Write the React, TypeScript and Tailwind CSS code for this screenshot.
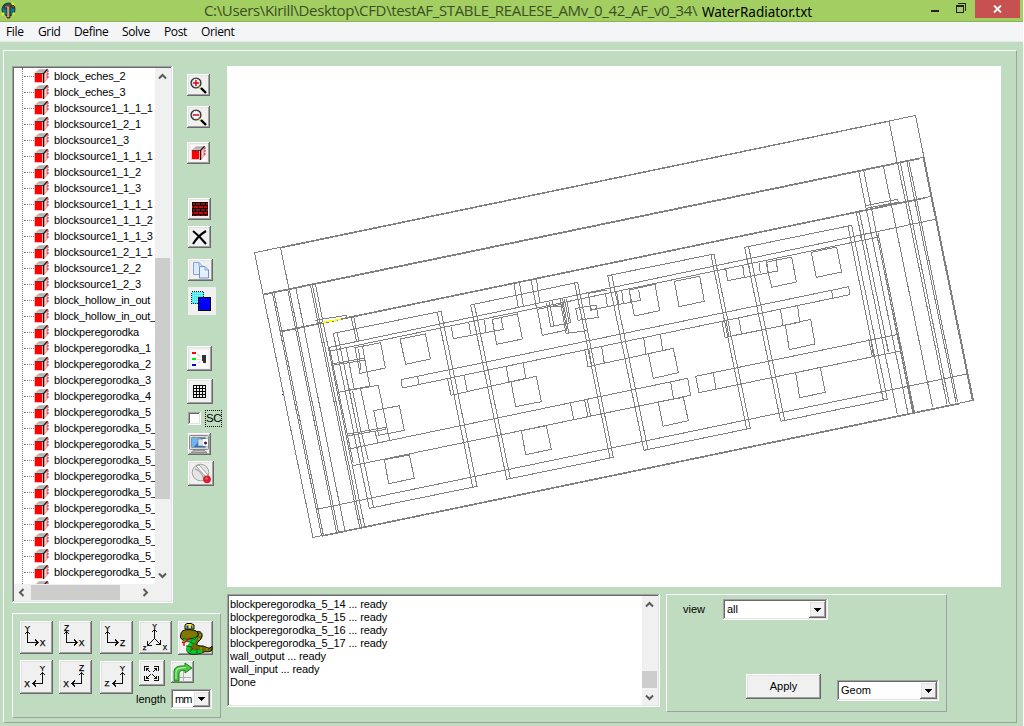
import React from "react";

const RAISED =
  "shrink-0 bg-[#f0f0f0] flex items-center justify-center shadow-[inset_-1px_-1px_#696969,inset_1px_1px_#ffffff,inset_-2px_-2px_#a0a0a0,inset_2px_2px_#e3e3e3]";
const SUNKEN =
  "shrink-0 bg-white p-[2px] shadow-[inset_-1px_-1px_#ffffff,inset_1px_1px_#a0a0a0,inset_-2px_-2px_#e3e3e3,inset_2px_2px_#696969]";
const GROUP = "border border-t-white border-l-white border-r-[#a0a0a0] border-b-[#a0a0a0]";

const treeItems = [
  "block_eches_2", "block_eches_3", "blocksource1_1_1_1", "blocksource1_2_1", "blocksource1_3",
  "blocksource1_1_1_1", "blocksource1_1_2", "blocksource1_1_3", "blocksource1_1_1_1", "blocksource1_1_1_2",
  "blocksource1_1_1_3", "blocksource1_2_1_1", "blocksource1_2_2", "blocksource1_2_3", "block_hollow_in_out",
  "block_hollow_in_out_", "blockperegorodka", "blockperegorodka_1", "blockperegorodka_2", "blockperegorodka_3",
  "blockperegorodka_4", "blockperegorodka_5", "blockperegorodka_5_", "blockperegorodka_5_", "blockperegorodka_5_",
  "blockperegorodka_5_", "blockperegorodka_5_", "blockperegorodka_5_", "blockperegorodka_5_", "blockperegorodka_5_",
  "blockperegorodka_5_", "blockperegorodka_5_", "blockperegorodka_5_",
];

const logLines = [
  "blockperegorodka_5_14 ... ready", "blockperegorodka_5_15 ... ready", "blockperegorodka_5_16 ... ready",
  "blockperegorodka_5_17 ... ready", "wall_output ... ready", "wall_input ... ready", "Done",
];

function Cube({ className = "" }: { className?: string }) {
  return (
    <svg width="15" height="16" viewBox="0 0 15 16" className={className}>
      <path d="M0 5L5 1H14L9.5 5Z" fill="#f6c4c4" />
      <path d="M2 4.6L5.5 1.6H12L9 4.6Z" fill="#b4b4b4" />
      <path d="M10 5.5L14 1.5V10.5L10 15Z" fill="#f89898" />
      <path d="M11.7 5V12" stroke="#ffd8d8" />
      <rect x="0" y="5" width="9" height="10" fill="#ffc0c0" />
      <rect x="1" y="6" width="7" height="8" fill="#fe0000" />
      <path d="M1 5.5H9" stroke="#404040" fill="none" />
      <path d="M9.5 15V5.5L13.5 1.2" stroke="#101010" strokeWidth="1.2" fill="none" />
      <path d="M14 2V10" stroke="#702020" strokeWidth=".8" strokeDasharray="2 1" />
    </svg>
  );
}

function Chevron({ d }: { d: string }) {
  return (
    <svg width="9" height="9" viewBox="0 0 9 9">
      <path d={d} fill="none" stroke="#5a5a5a" strokeWidth="2" />
    </svg>
  );
}
const UP = "M1 6.5L4.5 3L8 6.5";
const DOWN = "M1 2.5L4.5 6L8 2.5";
const LEFT = "M6.5 1L3 4.5L6.5 8";
const RIGHT = "M2.5 1L6 4.5L2.5 8";

function Magnifier({ plus }: { plus?: boolean }) {
  return (
    <svg width="17" height="17" viewBox="0 0 17 17">
      <circle cx="6" cy="6" r="4.9" fill="#fff" stroke="#303030" strokeWidth="1.4" />
      <circle cx="6" cy="6" r="3.7" fill="none" stroke="#9a9a9a" strokeWidth=".8" strokeDasharray="1 1" />
      <path d={plus ? "M3 6H9M6 3V9" : "M3 6H9"} stroke="#e00010" strokeWidth="1.5" />
      <path d="M9 10L11 12" stroke="#e8d840" strokeWidth="1.8" />
      <path d="M11 11L16 16" stroke="#000" strokeWidth="2.4" />
    </svg>
  );
}

function Bricks() {
  return (
    <svg width="16" height="14" viewBox="0 0 16 14" shapeRendering="crispEdges">
      <rect width="16" height="14" fill="#100000" />
      {[0, 1, 2, 3, 4].map((r) => (
        <path
          key={r}
          d={r % 2 ? "M0 0H1M2 0H6M7 0H11M12 0H15" : "M1 0H3M4 0H8M9 0H13M14 0H16"}
          transform={"translate(0 " + (1.5 + r * 3) + ")"}
          stroke={r % 2 ? "#c80808" : "#980808"}
          strokeWidth="2"
        />
      ))}
    </svg>
  );
}

function CopyIcon() {
  return (
    <svg width="18" height="18" viewBox="0 0 18 18">
      <path d="M1.5 1.5H7L10.5 5V13.5H1.5Z" fill="#dcecfc" stroke="#80a4d8" />
      <path d="M7.5 5.5H13L16.5 9V17H7.5Z" fill="#e4f0fe" stroke="#6c94d0" />
      <path d="M13 5.5V9H16.5M7 1.5V5" fill="none" stroke="#80a4d8" />
    </svg>
  );
}

function LayersIcon() {
  return (
    <svg width="20" height="20" viewBox="0 0 20 20" shapeRendering="crispEdges">
      <rect x=".5" y=".5" width="12" height="12" fill="#40f0f4" stroke="#002020" strokeDasharray="1 1" />
      {[2, 4, 6, 8, 10].map((y) => (
        <path key={y} d={"M2 " + (y + 0.5) + "H12"} stroke="#d0ffff" strokeDasharray="1 1" />
      ))}
      <rect x="7.5" y="6.5" width="12" height="13" fill="#0000fe" stroke="#000" />
    </svg>
  );
}

function LegendIcon() {
  return (
    <svg width="17" height="18" viewBox="0 0 17 18" shapeRendering="crispEdges">
      <rect width="17" height="18" fill="#fafafa" />
      <path d="M1 3H5" stroke="#f00" strokeWidth="2" />
      <path d="M1 9H5" stroke="#0e0" strokeWidth="2" />
      <path d="M1 15H5" stroke="#00e" strokeWidth="2" />
      <path d="M6 4L10 7M6 9H10M6 14L10 11" stroke="#dedede" fill="none" />
      <path d="M11 5H15V13H12V11H11Z" fill="#303030" />
    </svg>
  );
}

function GridIcon() {
  return (
    <svg width="13" height="13" viewBox="0 0 13 13" shapeRendering="crispEdges">
      <path d="M0 .5H13M0 3.5H13M0 6.5H13M0 9.5H13M0 12.5H13M.5 0V13M3.5 0V13M6.5 0V13M9.5 0V13M12.5 0V13" stroke="#000" />
    </svg>
  );
}

function MonitorIcon() {
  return (
    <svg width="21" height="20" viewBox="0 0 21 20">
      <rect x=".5" y="1.5" width="19" height="14" rx="1" fill="#d8d8d4" stroke="#8c8c8c" />
      <rect x="3" y="4" width="13" height="9" fill="#2878d0" stroke="#305078" />
      <path d="M3 4H12L5 13H3Z" fill="#70b4f0" />
      <rect x="9" y="5" width="9" height="7" fill="#d8e0ec" stroke="#7888a0" strokeWidth=".8" />
      <rect x="14" y="5" width="5" height="7" fill="#fff" />
      <circle cx="16.5" cy="9" r="1.5" fill="#202838" />
      <path d="M5 16H15L18 18.5H2Z" fill="#b8b8b8" stroke="#777" strokeWidth=".7" />
    </svg>
  );
}

function DiscIcon() {
  return (
    <svg width="21" height="21" viewBox="0 0 21 21">
      <circle cx="9.5" cy="9.5" r="8.3" fill="#e4e4e4" stroke="#a0a0a0" />
      <path d="M4 6C8 7 12 11 13 17" fill="none" stroke="#a8a8a8" strokeWidth="1.5" />
      <path d="M5 3L8 2L17 12L16 15Z" fill="#fafafa" stroke="#8c8c8c" strokeWidth=".8" />
      <circle cx="16" cy="16.3" r="3.9" fill="#d8202c" />
      <circle cx="15.5" cy="15.5" r="1.3" fill="#f06068" />
    </svg>
  );
}

type Letter = { t: string; x: number; y: number; s?: number };
function AxisIcon({ d, letters }: { d: string; letters: Letter[] }) {
  return (
    <svg width="33" height="33" viewBox="0 0 33 33">
      <path d={d} fill="none" stroke="#101010" strokeWidth="1" shapeRendering="crispEdges" />
      {letters.map((l) => (
        <text
          key={l.t}
          x={l.x}
          y={l.y}
          fontSize={l.s ?? 9}
          textAnchor="middle"
          fontFamily="Liberation Sans, sans-serif"
          fill="#000"
          stroke="#000"
          strokeWidth=".25"
        >
          {l.t}
        </text>
      ))}
    </svg>
  );
}
const RIGHT_AXES = "M7.5 10V21.5H18M4.5 13.5L7.5 10.5L10.5 13.5M15 18.5L18 21.5L15 24.5";
const LEFT_AXES = "M22.5 11V22.5H13M19.5 14.5L22.5 11.5L25.5 14.5M16 19.5L13 22.5L16 25.5";

function Snake() {
  return (
    <svg width="35" height="34" viewBox="0 0 35 34">
      <path d="M15 12C24 7 27 15 21 20C17 24 19 25 25 25C29 26 31 29 34 25V29C31 32 28 30 26 31C19 34 10 34 9 30C7 25 17 21 16 18Z" fill="#706c00" stroke="#000" />
      <path d="M12 17L17 16C18 20 10 24 10 28C10 31 16 32 24 30" fill="none" stroke="#00cc30" strokeWidth="3.6" />
      <path d="M10 20L16 23M8 25L14 26M12 31L15 27M19 32V28" stroke="#005810" />
      <path d="M3 13C3 9 8 8 15 9C21 10 22 15 17 17L6 19C2 18 2 16 3 13Z" fill="#807800" stroke="#000" />
      <path d="M5 17C10 20 16 18 20 14L17 18L11 21L5 20Z" fill="#00d040" stroke="#004010" strokeWidth=".6" />
      <path d="M7 8V4L9 2.5H13L16 4V8Z" fill="#f8e820" stroke="#000" />
      <path d="M8.5 4.5H10.5V7.5H8.5ZM13 4.5H14.5V7.5H13Z" fill="#003cff" />
      <path d="M12 17L6 22L4 21M6 22V25" fill="none" stroke="#f00" strokeWidth="1.4" />
      <path d="M21 14H23M22 18H20M22 27H24M28 28H30" stroke="#b8b000" />
    </svg>
  );
}

function ExpandIcon() {
  return (
    <svg width="15" height="15" viewBox="0 0 15 15" shapeRendering="crispEdges">
      <path d="M.5 5V.5H5M10 .5H14.5V5M14.5 10V14.5H10M5 14.5H.5V10" fill="none" stroke="#101010" />
      <path
        d="M2.5 5V2.5H5M10 2.5H12.5V5M12.5 10V12.5H10M5 12.5H2.5V10M2.5 2.5L6.5 6.5M12.5 2.5L8.5 6.5M2.5 12.5L6.5 8.5M12.5 12.5L8.5 8.5"
        fill="none"
        stroke="#101010"
      />
    </svg>
  );
}

function TurnArrow() {
  return (
    <svg width="21" height="20" viewBox="0 0 21 20">
      <path d="M11.5 8V20M3 15.5H19" stroke="#b0b0b0" />
      <path d="M2 19V10C2 5 6 3.5 13 4V1L20 6L13 11V8.5C9 8 7 9 7 12V19Z" fill="#4cc444" stroke="#16841c" />
      <path d="M4 17V10C4 7 7 5.5 14 5.5" fill="none" stroke="#a4f090" strokeWidth="1.3" />
    </svg>
  );
}

function Combo({ value, className }: { value: string; className: string }) {
  return (
    <div className={"flex " + SUNKEN + " " + className}>
      <span className="flex flex-1 items-center pl-[2px]">{value}</span>
      <span className={"w-[17px] h-full " + RAISED}>
        <svg width="7" height="4" viewBox="0 0 7 4" shapeRendering="crispEdges">
          <path d="M0 0H7L3.5 4Z" fill="#000" />
        </svg>
      </span>
    </div>
  );
}

/* Edge lists per model region, in thirds of a pixel from the region's corner. */
const third = 1 / 3;
const regionA =
  "M122 54L147 178M143 178L290 910M148 178L295 905M168 176L315 903M97 188L245 918M102 188L250 915M211 165L359 893M217 165L365 893M226 162L374 890" +
  "M345 353L422 338L436 414L360 430ZM480 327L556 312L571 387L497 403ZM401 542L478 527L493 601L416 616ZM433 689L508 675L523 745L446 761Z" +
  "M280 310L603 244L711 769L388 835ZM292 310L400 830M592 247L698 772" +
  "M483 449L487 474M533 438L536 466M294 487L415 466L449 632M275 402L372 385V391L275 406M320 613L437 592V598L320 618" +
  "M225 271L318 256L320 264L228 280M333 260L350 335M341 260L357 335M268 352L340 700M300 350L328 480L374 705M318 350L343 480" +
  "M356 358L362 420M368 352L389 468L300 486M338 483L362 600L385 690M362 478L390 610M404 602L414 638";
const regionB =
  "M92 195L413 127L520 652L200 718ZM103 193L211 716M404 129L510 654" +
  "M157 238L232 222L247 297L170 313ZM292 208L367 192L380 270L307 286ZM568 150L645 133L659 212L583 228ZM213 426L289 409L304 485L227 500ZM625 341L700 325L715 398L640 415Z" +
  "M244 572L319 557L334 628L257 644ZM655 486L730 472L745 542L669 559Z" +
  "M34 260L40 296L190 268L183 233M86 247L92 283M102 245L110 280M133 240L138 275M157 238L162 271" +
  "M445 160L452 210L601 181L596 150M445 160L500 150M497 163L502 198M530 155L536 192M545 152L550 190M568 150L573 185" +
  "M23 417L33 466L257 415L250 370M32 415L42 463M73 408L82 455M199 380L207 430" +
  "M436 332L444 380L668 332L661 283M447 330L455 377M485 322L493 370M611 293L618 343" +
  "M391 488L401 539M434 480L444 530M442 478L452 528M692 426L700 475M743 415L752 466" +
  "M221 128L235 202M238 125L250 198M273 118L290 207M289 115L300 190" +
  "M320 188L332 260L392 248L380 178M328 186L342 258M338 183L340 200L365 198M360 178L378 280L442 272M368 177L386 278M373 178L388 250" +
  "M407 205L414 241L475 232L468 195ZM418 203L428 240M450 196L455 210L468 206";
const regionC =
  "M422 664L314 142L635 76M326 141L434 661M213 165L320 687M-97 227L222 162L331 685L12 751ZM-85 224L24 749" +
  "M103 244L179 229L193 304L117 320ZM378 187L455 171L469 246L395 262ZM514 157L590 141L605 216L529 232ZM436 375L512 358L525 432L448 449ZM467 518L541 502L556 577L479 593Z" +
  "M257 205L263 242L413 213L408 178M308 195L313 231M326 192L332 228M357 188L361 220M380 184L384 218" +
  "M246 364L255 412L479 367L473 318M258 361L266 409M296 354L305 403M421 328L429 376" +
  "M167 529L177 578M220 518L228 567M575 270L578 294M626 260L629 284";
const regionD =
  "M309 172L457 900M207 62L231 185M190 197L338 922M115 210L264 940M130 207L280 937M232 185L381 912M240 184L388 911M260 182L408 907M266 180L413 906" +
  "M108 332L232 943M117 330L206 757M170 400L278 937M174 400L283 936M95 376L202 898L-118 964M84 379L190 900" +
  "M137 317L232 298L236 306L140 325M122 405L170 395L172 412M122 405L124 423M146 718L157 770M152 718L161 770M195 710L205 757M235 703L245 752";

function Wireframe() {
  return (
    <svg width="774" height="521" viewBox="227 66 774 521" shapeRendering="crispEdges" fill="none" stroke="#808080" strokeWidth="1" className="block">
      <path d="M254.5 252.7L915.5 115.5L973.4 400.2L313 537.5Z" />
      <path d="M262.5 294.3L923 157.3M280.7 331.3L931 196.3M329 347.4L935 219.4M329 351.2L877 237.3M401 379.7L848.7 286.7M402.3 388L849.7 294.7M349 449L687.7 378.3M352.7 465.7L690.7 395.3M695.7 376.3L898.3 334.3M699 392.7L901.7 350.7M317 509.3L967 374" />
      <path d="M282 247.7L890 121.1M264 294.8L920 158.7M322 536.3L960 403.7M282 331.7L925 198.2" />
      <g transform={"translate(240 230) scale(" + third + ")"}>
        <path vectorEffect="non-scaling-stroke" d={regionA} />
        <path vectorEffect="non-scaling-stroke" d="M246 278L303 267" stroke="#ffff00" strokeWidth="1.4" />
        <rect x="126" y="491" width="4" height="4" fill="#0000ff" stroke="none" />
      </g>
      <g transform={"translate(440 240) scale(" + third + ")"}>
        <path vectorEffect="non-scaling-stroke" d={regionB} />
      </g>
      <g transform={"translate(640 200) scale(" + third + ")"}>
        <path vectorEffect="non-scaling-stroke" d={regionC} />
      </g>
      <g transform={"translate(820 100) scale(" + third + ")"}>
        <path vectorEffect="non-scaling-stroke" d={regionD} />
      </g>
    </svg>
  );
}

function TitleBar() {
  return (
    <div className="flex h-[22px] shrink-0 border-b border-[#8db355] bg-[#a2ce62]">
      <svg width="17" height="19" viewBox="0 0 17 19" className="mt-px shrink-0">
        <circle cx="8.5" cy="8.5" r="6.5" fill="#0c7c84" stroke="#083c40" />
        <path d="M5 4H13L15 7H12V5H10V17H7V7H4Z" fill="#a06850" stroke="#301810" strokeWidth=".8" />
        <path d="M8 6V16" stroke="#f0d8c0" />
        <path d="M1 13L3 11L5 13L3 15ZM12 13L14 11L15 13L13 15ZM11 2L13 1L15 4H12Z" fill="#f0e820" />
      </svg>
      <div className="ml-[187px] w-[498px] shrink-0 whitespace-nowrap font-['Open_Sans',sans-serif] text-[15px] leading-[21px] tracking-[-0.35px] text-[#3d4f25]">
        {"C:\\Users\\Kirill\\Desktop\\CFD\\testAF_STABLE_REALESE_AMv_0_42_AF_v0_34\\"}
      </div>
      <div className="w-[229px] shrink-0 pt-[2px] font-['Noto_Sans',sans-serif] text-[13.5px] leading-[21px] text-black">WaterRadiator.txt</div>
      <svg width="44" height="18" viewBox="931 0 44 18" shapeRendering="crispEdges" className="shrink-0">
        <path d="M931 11H939" stroke="#222" strokeWidth="2" />
        <path d="M956 5.5H964M956.5 5V13M964 12.5H956M963.5 13V5M958 3.5H966M965.5 3V11M956 6H964" stroke="#222" fill="none" />
      </svg>
      <div className="flex h-[18px] w-[45px] shrink-0 items-center justify-center bg-[#c75050]">
        <svg width="9" height="8" viewBox="0 0 9 8">
          <path d="M1 .5L8 7.5M8 .5L1 7.5" stroke="#fff" strokeWidth="1.8" />
        </svg>
      </div>
    </div>
  );
}

function MenuBar() {
  return (
    <div className="flex h-[20px] shrink-0 border-b border-[#e6e8e8] bg-[#f4f5f7] pl-[6px] font-['Open_Sans',sans-serif] text-[12px] leading-[20px] tracking-[-0.35px] text-black">
      <span className="w-[32px]">File</span>
      <span className="w-[36px]">Grid</span>
      <span className="w-[48px]">Define</span>
      <span className="w-[42px]">Solve</span>
      <span className="w-[37px]">Post</span>
      <span>Orient</span>
    </div>
  );
}

function Tree() {
  return (
    <div className={"flex h-[537px] w-[161px] flex-col " + SUNKEN}>
      <div className="flex h-[516px] shrink-0">
        <div className="w-[141px] overflow-hidden pl-[8px]">
          <div className="border-l border-dotted border-[#808080]">
            {treeItems.map((t, i) => (
              <div key={i} className="flex h-[16px] items-center whitespace-nowrap">
                <span className="ml-px w-[10px] shrink-0 border-t border-dotted border-[#808080]" />
                <Cube className="shrink-0" />
                <span className="ml-[5px] leading-[16px] tracking-[-0.15px]">{t}</span>
              </div>
            ))}
          </div>
        </div>
        <div className="flex w-[16px] flex-col bg-[#f0f0f0]">
          <div className="flex h-[190px] items-start pl-[3px] pt-[4px]"><Chevron d={UP} /></div>
          <div className="h-[241px] w-[15px] bg-[#cdcdcd]" />
          <div className="flex flex-1 items-end pb-[4px] pl-[3px]"><Chevron d={DOWN} /></div>
        </div>
      </div>
      <div className="flex h-[17px] items-center bg-[#f0f0f0]">
        <div className="w-[17px] pl-[3px]"><Chevron d={LEFT} /></div>
        <div className="h-[15px] w-[89px] bg-[#cdcdcd]" />
        <div className="pl-[21px]"><Chevron d={RIGHT} /></div>
      </div>
    </div>
  );
}

function ToolColumn() {
  return (
    <div className="ml-[14px] flex flex-col items-start pt-[8px]">
      <div className={"h-[22px] w-[23px] " + RAISED}><Magnifier plus /></div>
      <div className={"mt-[10px] h-[22px] w-[23px] " + RAISED}><Magnifier /></div>
      <div className={"mt-[14px] h-[22px] w-[23px] " + RAISED}>
        <span className="bg-white"><Cube className="block" /></span>
      </div>
      <div className={"ml-px mt-[34px] h-[22px] w-[23px] " + RAISED}><Bricks /></div>
      <div className={"ml-px mt-[6px] h-[22px] w-[23px] " + RAISED}>
        <svg width="15" height="15" viewBox="0 0 15 15">
          <path d="M1 1C5 4 10 9 14 14M14 1C9 4 4 9 1 14" fill="none" stroke="#000" strokeWidth="2.1" />
        </svg>
      </div>
      <div className={"ml-px mt-[11px] h-[22px] w-[25px] " + RAISED}><CopyIcon /></div>
      <div className="ml-px mt-[6px] flex h-[28px] w-[28px] items-center justify-center bg-[#f0f0f0] pr-[2px]"><LayersIcon /></div>
      <div className={"mt-[31px] h-[25px] w-[25px] " + RAISED}><LegendIcon /></div>
      <div className={"mt-[8px] h-[25px] w-[26px] pr-px " + RAISED}><GridIcon /></div>
      <div className="ml-px mt-[6px] flex h-[17px] items-center gap-[4px]">
        <span className={"h-[13px] w-[13px] " + SUNKEN} />
        <span className="h-[17px] w-[17px] border border-dotted border-black text-center text-[11.5px] leading-[15px] tracking-[-0.6px]">SC</span>
      </div>
      <div className={"ml-px mt-[6px] h-[22px] w-[23px] " + RAISED}><MonitorIcon /></div>
      <div className={"ml-px mt-[6px] h-[25px] w-[26px] " + RAISED}><DiscIcon /></div>
    </div>
  );
}

function OrientPanel() {
  return (
    <div className={"mt-[10px] flex h-[105px] w-[209px] flex-col pl-[7px] pt-[7px] " + GROUP}>
      <div className="flex h-[39px] items-start">
        <div className={"mr-[6px] h-[33px] w-[33px] " + RAISED}>
          <AxisIcon d={RIGHT_AXES} letters={[{ t: "Y", x: 7.5, y: 10, s: 8 }, { t: "X", x: 22.5, y: 24.5, s: 8.5 }]} />
        </div>
        <div className={"mr-[8px] h-[33px] w-[33px] " + RAISED}>
          <AxisIcon d={RIGHT_AXES} letters={[{ t: "Z", x: 7.5, y: 10, s: 8.5 }, { t: "X", x: 22.5, y: 24.5, s: 8.5 }]} />
        </div>
        <div className={"mr-[6px] h-[33px] w-[33px] " + RAISED}>
          <AxisIcon d={RIGHT_AXES} letters={[{ t: "Y", x: 7.5, y: 10, s: 8 }, { t: "Z", x: 22.5, y: 24.5, s: 8.5 }]} />
        </div>
        <div className={"mr-[6px] h-[33px] w-[33px] " + RAISED}>
          <AxisIcon
            d="M15.5 8V17.5L8.5 24.5M15.5 17.5L21.5 23.5M12.5 11.5L15.5 8.5L18.5 11.5M8.5 20V24.5H13M21.5 19V23.5H17"
            letters={[{ t: "Y", x: 15.5, y: 8, s: 7 }, { t: "Z", x: 5.5, y: 28.5, s: 6 }, { t: "X", x: 26, y: 28.5, s: 6.5 }]}
          />
        </div>
        <div className={"h-[34px] w-[35px] " + RAISED}><Snake /></div>
      </div>
      <div className="flex h-[29px] items-start">
        <div className={"mr-[6px] h-[34px] w-[33px] " + RAISED}>
          <AxisIcon d={LEFT_AXES} letters={[{ t: "Y", x: 22.5, y: 9.5, s: 8 }, { t: "X", x: 7, y: 25.5, s: 8.5 }]} />
        </div>
        <div className={"mr-[8px] h-[34px] w-[33px] " + RAISED}>
          <AxisIcon d={LEFT_AXES} letters={[{ t: "Z", x: 22.5, y: 9.5, s: 8.5 }, { t: "X", x: 7, y: 25.5, s: 8.5 }]} />
        </div>
        <div className={"mr-[6px] mt-px h-[33px] w-[33px] " + RAISED}>
          <AxisIcon d={LEFT_AXES} letters={[{ t: "Y", x: 22.5, y: 9.5, s: 8 }, { t: "Z", x: 7, y: 24.5, s: 8 }]} />
        </div>
        <div className={"mr-[6px] h-[26px] w-[26px] pr-px " + RAISED}><ExpandIcon /></div>
        <div className={"mt-px h-[22px] w-[23px] " + RAISED}><TurnArrow /></div>
      </div>
      <div className="flex h-[20px] items-center pl-[116px]">
        <span className="w-[35px]">length</span>
        <Combo value="mm" className="h-[20px] w-[41px] tracking-[-1px]" />
      </div>
    </div>
  );
}

function LogPane() {
  return (
    <div className={"flex h-[113px] w-[433px] " + SUNKEN}>
      <div className="flex-1 pl-px pt-[2px]">
        {logLines.map((l) => (
          <div key={l} className="h-[13px] whitespace-nowrap leading-[13px] tracking-[-0.12px]">{l}</div>
        ))}
      </div>
      <div className="flex w-[16px] flex-col bg-[#f0f0f0]">
        <div className="flex h-[75px] items-start pl-[3px] pt-[4px]"><Chevron d={UP} /></div>
        <div className="h-[17px] w-[15px] bg-[#cdcdcd]" />
        <div className="flex flex-1 items-end pb-[3px] pl-[3px]"><Chevron d={DOWN} /></div>
      </div>
    </div>
  );
}

function ViewPanel() {
  return (
    <div className={"ml-[6px] flex h-[118px] w-[281px] flex-col " + GROUP}>
      <div className="flex pl-[16px] pt-[4px]">
        <span className="w-[40px] leading-[20px]">view</span>
        <Combo value="all" className="h-[21px] w-[105px]" />
      </div>
      <div className="mt-[54px] flex items-start pl-[79px]">
        <div className={"h-[25px] w-[75px] " + RAISED}>Apply</div>
        <Combo value="Geom" className="ml-[16px] mt-[6px] h-[21px] w-[102px]" />
      </div>
    </div>
  );
}

export default function App() {
  return (
    <div className="h-[726px] w-[1024px] overflow-hidden bg-white">
      <div className="flex h-full w-[1023px] flex-col bg-[#c0dcc0] font-['Liberation_Sans',Arial,sans-serif] text-[11px] leading-[13px] text-black">
        <TitleBar />
        <MenuBar />
        <div className={"ml-[3px] mt-[8px] flex h-[673px] w-[1014px] shrink-0 pl-[8px] pt-[15px] " + GROUP}>
          <div className="w-[215px] shrink-0">
            <div className="flex">
              <Tree />
              <ToolColumn />
            </div>
            <OrientPanel />
          </div>
          <div className="w-[774px] shrink-0">
            <div className="h-[521px] bg-white"><Wireframe /></div>
            <div className="mt-[7px] flex">
              <LogPane />
              <ViewPanel />
            </div>
          </div>
        </div>
      </div>
    </div>
  );
}
